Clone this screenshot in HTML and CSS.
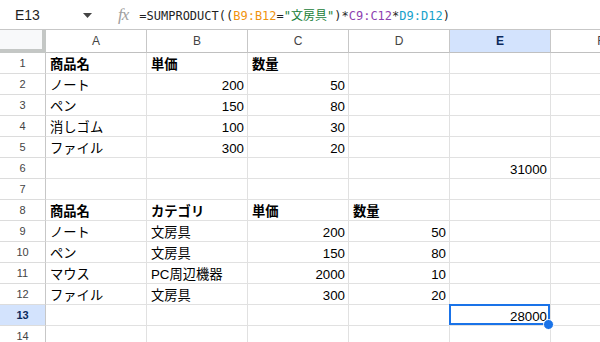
FILE: index.html
```html
<!DOCTYPE html>
<html lang="ja">
<head>
  <meta charset="UTF-8" />
  <meta name="viewport" content="width=device-width, initial-scale=1" />
  <title>スプレッドシート</title>
  <link rel="stylesheet" href="styles.css">
</head>
<body>

  <header class="formula-bar">
    <div class="name-box">
      <span>E13</span>
      <svg class="caret" width="9" height="5" viewBox="0 0 9 5"><path d="M0 0h9L4.5 5z" fill="#444"/></svg>
    </div>
    <span class="fx">fx</span>
    <div class="formula">=SUMPRODUCT((<span class="r1">B9:B12</span>=<span class="str">"文房具"</span>)*<span class="r2">C9:C12</span>*<span class="r3">D9:D12</span>)</div>
  </header>

  <main class="sheet" id="sheet"></main>

  <script>
    const cols = ['A', 'B', 'C', 'D', 'E', 'F'];

    // [A, B, C, D, E] — numbers go right, bold rows are headers
    const rows = [
      { bold: true, cells: ['商品名', '単価', '数量', '', ''] },
      { cells: ['ノート', 200, 50, '', ''] },
      { cells: ['ペン', 150, 80, '', ''] },
      { cells: ['消しゴム', 100, 30, '', ''] },
      { cells: ['ファイル', 300, 20, '', ''] },
      { cells: ['', '', '', '', 31000] },
      { cells: ['', '', '', '', ''] },
      { bold: true, cells: ['商品名', 'カテゴリ', '単価', '数量', ''] },
      { cells: ['ノート', '文房具', 200, 50, ''] },
      { cells: ['ペン', '文房具', 150, 80, ''] },
      { cells: ['マウス', 'PC周辺機器', 2000, 10, ''] },
      { cells: ['ファイル', '文房具', 300, 20, ''] },
      { cells: ['', '', '', '', 28000] },
      { cells: ['', '', '', '', ''] },
    ];

    const sheet = document.getElementById('sheet');
    const active = { col: 'E', row: 13 };

    function cell(cls, text) {
      const div = document.createElement('div');
      div.className = cls;
      div.textContent = text;
      sheet.appendChild(div);
      return div;
    }

    cell('corner', '');
    cols.forEach(c => cell('col-head' + (c === active.col ? ' on' : ''), c));

    rows.forEach((row, i) => {
      const n = i + 1;
      cell('row-head' + (n === active.row ? ' on' : ''), n);
      row.cells.forEach((v, j) => {
        let cls = 'cell';
        if (typeof v === 'number') cls += ' num';
        if (row.bold) cls += ' bold';
        if (n === active.row && cols[j] === active.col) cls += ' selected';
        cell(cls, v);
      });
      cell('cell', '');
    });
  </script>

</body>
</html>
```

FILE: styles.css
```css
body {
  margin: 0;
  background: #fff;
  font-family: 'Liberation Sans', 'Noto Sans CJK JP', sans-serif;
  color: #000;
  overflow: hidden;
}

.formula-bar {
  height: 29px;
  border-bottom: 1px solid #c7c7c7;
  display: flex;
  align-items: center;
}
.name-box {
  width: 100px;
  display: flex;
  align-items: center;
  justify-content: space-between;
  padding: 0 8px 0 15px;
  box-sizing: border-box;
  font-size: 14px;
  color: #1f1f1f;
}
.caret {
  margin-top: 1px;
}
.fx {
  margin-left: 18px;
  font-family: 'Liberation Serif', serif;
  font-style: italic;
  font-size: 17px;
  color: #a0a0a0;
  letter-spacing: -1px;
}
.formula {
  margin-left: 11px;
  font-family: 'DejaVu Sans Mono', 'Noto Sans CJK JP', monospace;
  font-size: 12px;
  color: #1f1f1f;
  white-space: nowrap;
}
.r1 { color: #f0930e; }
.str { color: #188038; }
.r2 { color: #8e3fb0; }
.r3 { color: #16a2cc; }

.sheet {
  display: grid;
  grid-template-columns: 46px repeat(6, 101px);
  grid-template-rows: 23px;
  grid-auto-rows: 21px;
}
.sheet > div {
  box-sizing: border-box;
  border-right: 1px solid #e1e1e1;
  border-bottom: 1px solid #e1e1e1;
  white-space: nowrap;
  overflow: hidden;
}

.corner {
  background: #f8f9fa;
  border-right: 4px solid #c4c7c5 !important;
  border-bottom: 4px solid #c4c7c5 !important;
}
.col-head {
  display: flex;
  align-items: center;
  justify-content: center;
  font-family: 'Liberation Sans', sans-serif;
  font-size: 12px;
  color: #444;
  border-right-color: #c7c7c7 !important;
  border-bottom-color: #c0c0c0 !important;
}
.row-head {
  display: flex;
  align-items: center;
  justify-content: center;
  font-size: 11px;
  color: #444;
  border-right-color: #c7c7c7 !important;
  border-bottom-color: #dcdcdc !important;
}
.col-head.on,
.row-head.on {
  background: #d3e3fd;
  color: #0b2a5c;
  font-weight: bold;
}

.cell {
  display: flex;
  align-items: flex-end;
  padding: 0 3px 1px 4px;
  font-size: 13.3px;
  line-height: 15px;
}
.cell.num {
  justify-content: flex-end;
}
.cell.bold {
  font-weight: bold;
}
.cell.selected {
  position: relative;
  overflow: visible;
}
.cell.selected::after {
  content: '';
  position: absolute;
  inset: -1px 0 0 -1px;
  border: 2px solid #1a73e8;
}
.cell.selected::before {
  content: '';
  position: absolute;
  right: -4px;
  bottom: -5px;
  width: 9px;
  height: 9px;
  border-radius: 50%;
  background: #1a73e8;
  border: 1px solid #fff;
  z-index: 1;
}
```
